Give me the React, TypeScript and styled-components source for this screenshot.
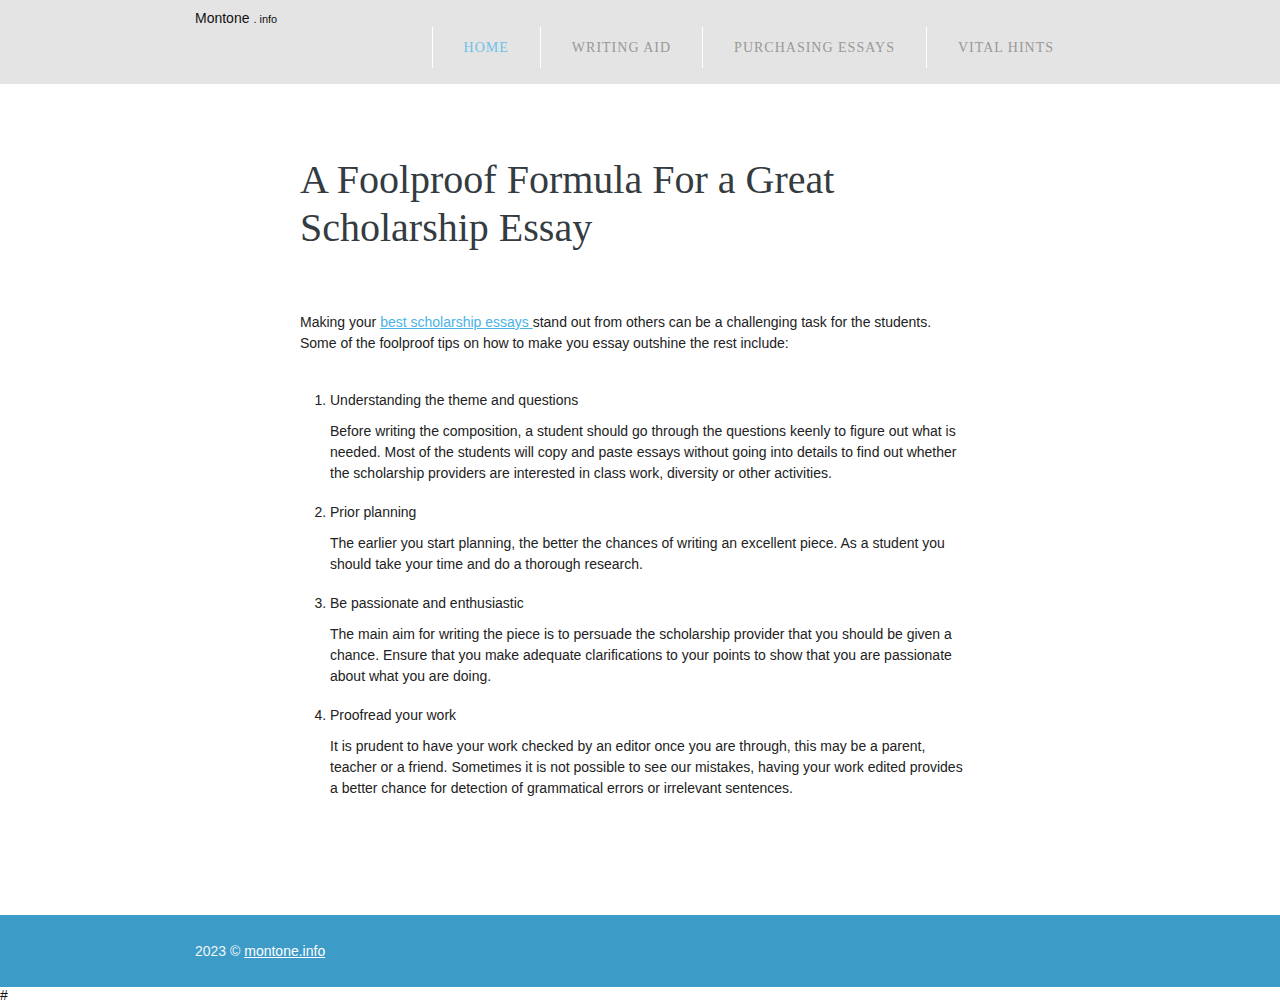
import React from "react";
import styled, { createGlobalStyle } from "styled-components";

const Global = createGlobalStyle`
  html, body { margin: 0; padding: 0; background: #fff; }
  body { font-family: "Liberation Sans", Arial, sans-serif; color: #222; }
`;

const Header = styled.header`
  background: #e4e4e4;
  height: 84px;
`;

const HeaderInner = styled.div`
  width: 890px;
  margin: 0 auto;
  display: flex;
  justify-content: space-between;
  align-items: flex-start;
`;

const Logo = styled.a`
  font-family: "Liberation Sans", Arial, sans-serif;
  font-size: 14px;
  color: #111;
  text-decoration: none;
  padding-top: 10px;
  line-height: 16px;
`;

const LogoSmall = styled.span`
  font-size: 11px;
`;

const Nav = styled.nav`
  display: flex;
  margin-top: 27px;
`;

const NavItem = styled.a<{ $active?: boolean }>`
  display: flex;
  align-items: center;
  height: 41px;
  padding: 0 31px;
  border-left: 1px solid #ffffff;
  font-family: "Liberation Serif", "Times New Roman", serif;
  font-size: 14px;
  letter-spacing: 1px;
  text-transform: uppercase;
  text-decoration: none;
  color: ${(p) => (p.$active ? "#6ec1e8" : "#999999")};
`;

const Main = styled.main`
  width: 680px;
  margin: 0 auto;
  padding: 72px 15px 0 0;
  min-height: 831px;
  box-sizing: border-box;
`;

const Title = styled.h1`
  font-family: "Liberation Serif", "Times New Roman", serif;
  font-weight: normal;
  font-size: 40px;
  line-height: 48px;
  color: #343b41;
  margin: 0 0 60px;
`;

const Para = styled.p`
  font-size: 14px;
  line-height: 21px;
  margin: 0;
  color: #222;
`;

const TextLink = styled.a`
  color: #4ab3e6;
  text-decoration: underline;
`;

const List = styled.ol`
  margin: 36px 0 0;
  padding-left: 30px;
  font-size: 14px;
  line-height: 21px;
  color: #222;
`;

const Item = styled.li`
  margin-bottom: 18px;
`;

const ItemTitle = styled.div``;

const ItemBody = styled.p`
  margin: 10px 0 0;
`;

const Footer = styled.footer`
  background: #3d9bc8;
  height: 72px;
`;

const FooterInner = styled.div`
  width: 890px;
  margin: 0 auto;
  padding-top: 28px;
  font-size: 14px;
  line-height: 16px;
  color: #f0f6fa;
`;

const FooterLink = styled.a`
  color: #ffffff;
  text-decoration: underline;
`;

const Hash = styled.div`
  font-size: 14px;
  line-height: 16px;
  color: #111;
`;

const items = [
  {
    title: "Understanding the theme and questions",
    body: "Before writing the composition, a student should go through the questions keenly to figure out what is needed. Most of the students will copy and paste essays without going into details to find out whether the scholarship providers are interested in class work, diversity or other activities.",
  },
  {
    title: "Prior planning",
    body: "The earlier you start planning, the better the chances of writing an excellent piece. As a student you should take your time and do a thorough research.",
  },
  {
    title: "Be passionate and enthusiastic",
    body: "The main aim for writing the piece is to persuade the scholarship provider that you should be given a chance. Ensure that you make adequate clarifications to your points to show that you are passionate about what you are doing.",
  },
  {
    title: "Proofread your work",
    body: "It is prudent to have your work checked by an editor once you are through, this may be a parent, teacher or a friend. Sometimes it is not possible to see our mistakes, having your work edited provides a better chance for detection of grammatical errors or irrelevant sentences.",
  },
];

export default function App() {
  return (
    <>
      <Global />
      <Header>
        <HeaderInner>
          <Logo href="#">
            Montone <LogoSmall>. info</LogoSmall>
          </Logo>
          <Nav>
            <NavItem href="#" $active>Home</NavItem>
            <NavItem href="#">Writing aid</NavItem>
            <NavItem href="#">Purchasing essays</NavItem>
            <NavItem href="#">Vital hints</NavItem>
          </Nav>
        </HeaderInner>
      </Header>
      <Main>
        <Title>A Foolproof Formula For a Great Scholarship Essay</Title>
        <Para>
          Making your <TextLink href="#">best scholarship essays </TextLink>stand out from others can be a
          challenging task for the students. Some of the foolproof tips on how to make you essay outshine the
          rest include:
        </Para>
        <List>
          {items.map((it) => (
            <Item key={it.title}>
              <ItemTitle>{it.title}</ItemTitle>
              <ItemBody>{it.body}</ItemBody>
            </Item>
          ))}
        </List>
      </Main>
      <Footer>
        <FooterInner>
          2023 © <FooterLink href="#">montone.info</FooterLink>
        </FooterInner>
      </Footer>
      <Hash>#</Hash>
    </>
  );
}
